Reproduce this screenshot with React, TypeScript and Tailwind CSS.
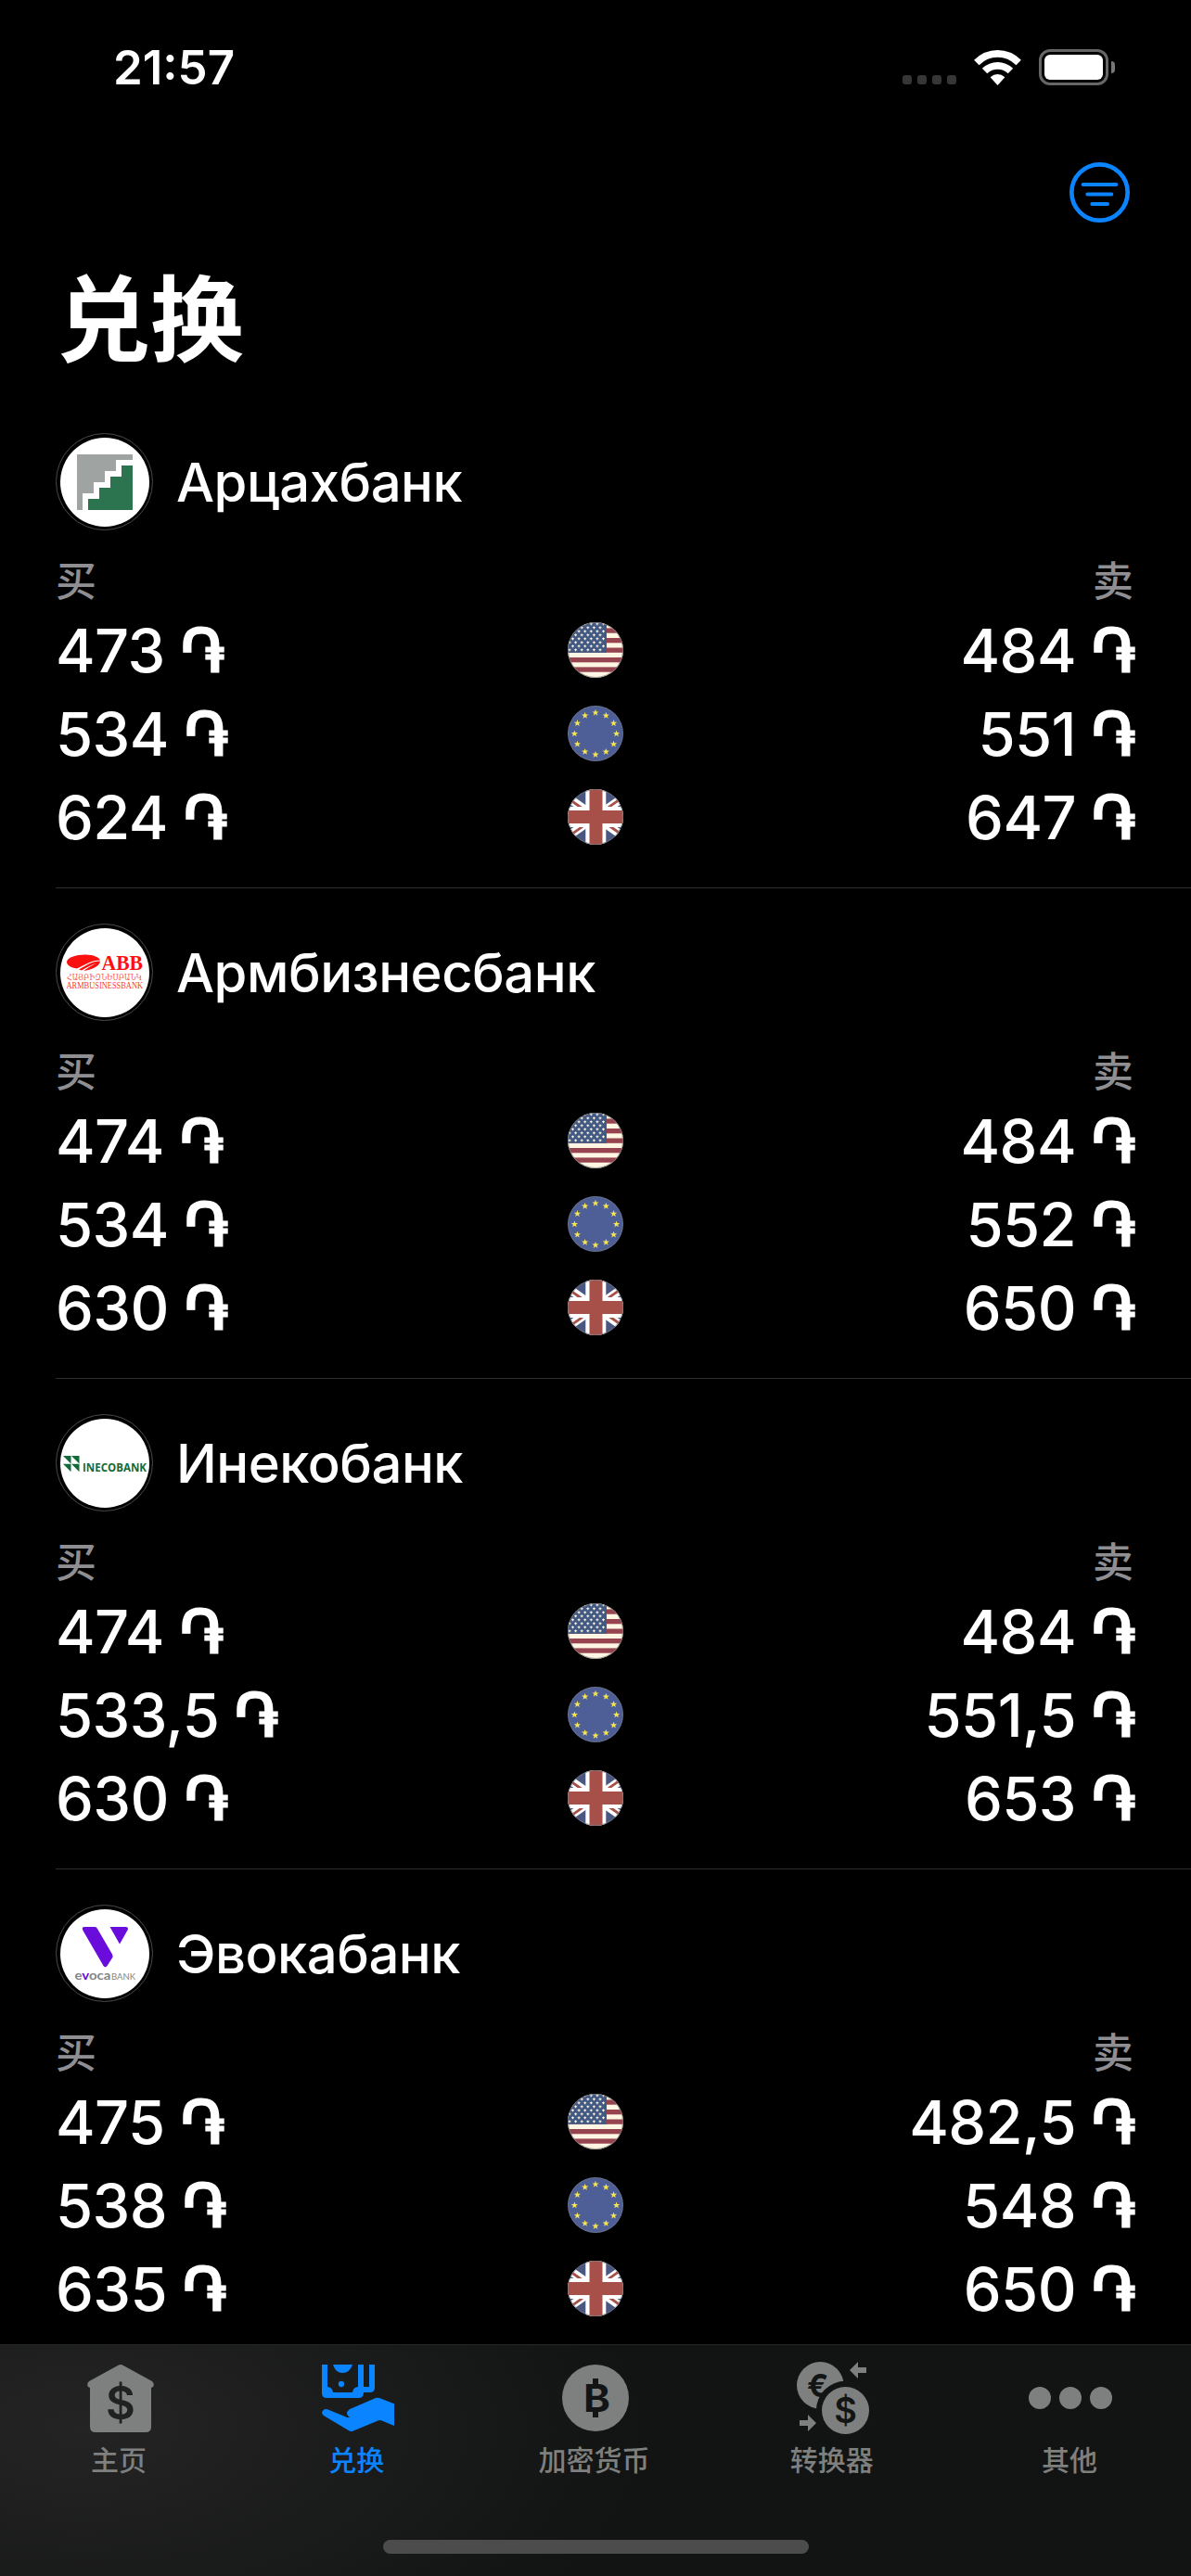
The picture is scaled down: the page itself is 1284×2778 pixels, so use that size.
import React from "react";

type Rate = { currency: "usd" | "eur" | "gbp"; buy: string; sell: string };
type Bank = { name: string; logo: React.ReactNode; rates: Rate[] };

const Flag = ({ currency }: { currency: Rate["currency"] }) => {
  return (
    <svg viewBox="0 0 60 60" className="size-[60px] rounded-full">
      {currency === "usd" && (
        <g>
          <rect width="60" height="60" fill="#fff6e3" />
          {[6.4, 17, 27.5, 38, 48.4].map((y) => (
            <rect key={y} y={y} width="60" height="5.3" fill="#96444f" />
          ))}
          <rect width="42" height="32.8" fill="#425983" />
          {[0, 1, 2, 3, 4, 5, 6, 7].map((row) =>
            [0, 1, 2, 3, 4, 5].map((col) => (
              <path
                key={`${row}-${col}`}
                transform={`translate(${(row % 2 ? 2 : 5.5) + col * 6.6} ${2 + row * 4})`}
                d="M-1.5 -.2H1.5M0-1.5V1.3"
                stroke="#fff6e3"
                strokeWidth="1.1"
              />
            )),
          )}
        </g>
      )}
      {currency === "eur" && (
        <g>
          <rect width="60" height="60" fill="#4e5f97" />
          {Array.from({ length: 12 }, (_, i) => {
            const a = (i * Math.PI) / 6;
            return (
              <path
                key={i}
                transform={`translate(${30 + 22.6 * Math.sin(a)} ${30.2 - 22.6 * Math.cos(a)})`}
                d="M0-3.8L.95-1.2 3.6-1.2 1.5.5 2.3 3.1 0 1.5-2.3 3.1-1.5.5-3.6-1.2-.95-1.2Z"
                fill="#f6e652"
              />
            );
          })}
        </g>
      )}
      {currency === "gbp" && (
        <g>
          <rect width="60" height="60" fill="#4a5780" />
          <path d="M-12 .6L72 59.4M72 .6L-12 59.4" stroke="#fff" strokeWidth="9" />
          <path
            d="M-2 8.4L16 21M62 7L44 19.6M-2 53L16 40.4M62 51.6L44 39"
            stroke="#a65049"
            strokeWidth="2.8"
          />
          <path d="M30.3 0V60M0 30H60" stroke="#fff" strokeWidth="22" />
          <path d="M30.5 0V60M0 30H60" stroke="#a65049" strokeWidth="14" />
        </g>
      )}
      <circle cx="30" cy="30" r="29.5" fill="none" stroke="#777" strokeOpacity=".7" />
    </svg>
  );
};

const ArtsakhLogo = () => (
  <svg viewBox="0 0 96 96" className="size-24">
    <path
      d="M18 18H78V24H60V36H48V48H36V60H24V78H18Z"
      fill="#9fa3a1"
    />
    <path d="M30 78V66H42V54H54V42H66V30H78V78Z" fill="#2c7350" />
  </svg>
);

const AbbLogo = () => (
  <svg viewBox="0 0 96 96" className="size-24" fill="#fb1010">
    <g transform="translate(0 -6.5)">
      <path d="M7 43C7 38 17 35 27 35C36 35 42 38 43 41C34 41 26 46 18 50C11 49 7 46 7 43Z" />
      <path d="M20 51C27 47 34 42 43 42C43 47 33 52 25 52.5C30 49 35 46 39 44C33 46 28 49 23 52Z" />
    </g>
    <g fontFamily="Liberation Serif, serif">
      <text x="44.500" y="45" fontSize="23" fontWeight="700" textLength="44.500" lengthAdjust="spacingAndGlyphs">
        ABB
      </text>
      <text
        x="7"
        y="56"
        fontSize="9"
        fillOpacity=".75"
        fontFamily="DejaVu Serif, serif"
        textLength="81"
        lengthAdjust="spacingAndGlyphs"
      >
        ՀԱՅԲԻԶՆԵՍԲԱՆԿ
      </text>
      <text x="6.500" y="65" fontSize="10.500" fillOpacity=".9" textLength="82.500" lengthAdjust="spacingAndGlyphs">
        ARMBUSINESSBANK
      </text>
    </g>
  </svg>
);

const InecoLogo = () => (
  <svg viewBox="0 0 96 96" className="size-24">
    <path
      d="M3 40H11.500V48.500ZM12 40H20.500V48.500ZM3 48.700H11.500V57.200ZM12 48.700H20.500V57.200Z"
      fill="#116a38"
    />
    <text
      x="24"
      y="57.300"
      fontSize="13"
      fontWeight="700"
      fontFamily="Open Sans, sans-serif"
      fill="#116a38"
      textLength="69"
      lengthAdjust="spacingAndGlyphs"
    >
      INECOBANK
    </text>
  </svg>
);

const EvocaLogo = () => (
  <svg viewBox="0 0 96 96" className="size-24">
    <path
      d="M26 19H37.500Q39 19 40 21L56 48.500Q57 50.500 56 52.500L50.500 61Q48.500 63.500 46.500 61L24.500 23Q22.500 19 26 19Z"
      fill="#6a0cdc"
    />
    <path d="M53.500 19H71Q74 19.500 72.500 22.500L64 37.500Z" fill="#6a0cdc" />
    <g fontFamily="Lato, sans-serif" fill="#828588">
      <text x="15.500" y="75.500" fontSize="14" fontWeight="700" textLength="39" lengthAdjust="spacingAndGlyphs">
        e<tspan fill="#6a0cdc">v</tspan>oca
      </text>
      <text x="55" y="75.500" fontSize="10" textLength="26" lengthAdjust="spacingAndGlyphs">
        BANK
      </text>
    </g>
  </svg>
);

const banks: Bank[] = [
  {
    name: "Арцахбанк",
    logo: <ArtsakhLogo />,
    rates: [
      { currency: "usd", buy: "473", sell: "484" },
      { currency: "eur", buy: "534", sell: "551" },
      { currency: "gbp", buy: "624", sell: "647" },
    ],
  },
  {
    name: "Армбизнесбанк",
    logo: <AbbLogo />,
    rates: [
      { currency: "usd", buy: "474", sell: "484" },
      { currency: "eur", buy: "534", sell: "552" },
      { currency: "gbp", buy: "630", sell: "650" },
    ],
  },
  {
    name: "Инекобанк",
    logo: <InecoLogo />,
    rates: [
      { currency: "usd", buy: "474", sell: "484" },
      { currency: "eur", buy: "533,5", sell: "551,5" },
      { currency: "gbp", buy: "630", sell: "653" },
    ],
  },
  {
    name: "Эвокабанк",
    logo: <EvocaLogo />,
    rates: [
      { currency: "usd", buy: "475", sell: "482,5" },
      { currency: "eur", buy: "538", sell: "548" },
      { currency: "gbp", buy: "635", sell: "650" },
    ],
  },
];

const StatusBar = () => (
  <div className="flex h-[141px] shrink-0 justify-between pr-[82px] pl-[122px]">
    <span className="mt-[43px] text-[51px] leading-[60px] font-semibold">21:57</span>
    <div className="mt-[53px] flex h-[39px] items-start">
      <div className="mt-7 flex gap-1.5">
        {[0, 1, 2, 3].map((dot) => (
          <div key={dot} className="size-2.5 rounded-[3px] bg-[#363636]" />
        ))}
      </div>
      <svg viewBox="271 41 151 113" className="mt-px ml-[19px] h-[38px] w-[51px]" fill="#fff">
        <path d="M271 73Q303 41 346.500 41T422 73L406 89Q380 64 346.500 64T287 89Z" />
        <path d="M297 100Q319 80 346.500 80T396 100L380 116Q365 103 346.500 103T313 116Z" />
        <path d="M323 128Q334 118 346.500 118T370 128L346.500 154Z" />
      </svg>
      <div className="ml-[19px] h-[39px] w-[75px] rounded-[12px] border-[3px] border-[#666] p-[3px]">
        <div className="h-full rounded-[6px] bg-white" />
      </div>
      <div className="mt-[13px] ml-[3px] h-[13px] w-1 rounded-r-full bg-[#777]" />
    </div>
  </div>
);

const Amount = ({ value }: { value: string }) => (
  <div className="flex items-center pt-0.5">
    <span className="text-[65px] leading-[90px] font-medium tracking-[-0.6px]">{value}</span>
    <span className="ml-[17px] font-['DejaVu_Sans'] text-[64px] leading-[90px] font-bold [-webkit-text-stroke:1px_white]">
      ֏
    </span>
  </div>
);

const BankSection = ({ bank }: { bank: Bank }) => (
  <section className="ml-[60px] h-[529px] shrink-0 border-b border-[#2d2d2f] pt-[38px] pr-[60px]">
    <div className="flex items-center gap-[25px]">
      <div className="flex size-[105px] items-center justify-center rounded-full border border-[#4a4a4a]">
        <div className="size-24 rounded-full bg-white">{bank.logo}</div>
      </div>
      <h2 className="text-[58px] leading-[72px] font-medium tracking-[-0.5px]">{bank.name}</h2>
    </div>
    <div className="mt-[27px] flex h-[56px] items-center justify-between pr-0.5 text-[44px] leading-[56px] font-medium text-[#8e8e93]">
      <span>买</span>
      <span>卖</span>
    </div>
    {bank.rates.map((rate) => (
      <div key={rate.currency} className="grid h-[90px] grid-cols-[1fr_60px_1fr] items-center">
        <Amount value={rate.buy} />
        <Flag currency={rate.currency} />
        <div className="flex justify-end">
          <Amount value={rate.sell} />
        </div>
      </div>
    ))}
  </section>
);

const HomeIcon = () => (
  <svg viewBox="0 0 72 73" className="h-[73px] w-[72px]" fill="currentColor">
    <path d="M33 1Q36-1 39 1L70 18Q73 21 71 24L69 25V67Q69 73 63 73H9Q3 73 3 67V25L1 24Q-1 21 2 18Z" />
    <text x="36" y="59" textAnchor="middle" fontSize="49" fontWeight="600" fill="#202121">
      $
    </text>
  </svg>
);

const ExchangeIcon = () => (
  <svg viewBox="48 60 234 216" className="h-[72px] w-[78px]" fill="currentColor">
    <path d="M48 60H66V132Q82 134 84 150H147Q149 134 165 132V60H183V132H201V60H219V134Q219 150 203 150H183Q183 168 167 168H64Q48 168 48 152Z" />
    <path d="M84 60H147Q138 87 115 87T84 60Z" />
    <circle cx="111" cy="123" r="9.500" />
    <path d="M66 205L130 231H139Q120 220 137 205L222 168Q229 166 236 169L282 187V258L240 241Q236 239 231 241L148 275Q143 277 138 275L55 226Q46 220 49 212Q54 201 66 205Z" />
  </svg>
);

const BitcoinIcon = () => (
  <svg viewBox="0 0 72 72" className="size-[72px]">
    <circle cx="36" cy="36" r="36" fill="currentColor" />
    <g fill="#131514">
      <text x="23" y="51" fontSize="41.500" fontWeight="700" textLength="29" lengthAdjust="spacingAndGlyphs">
        B
      </text>
      <rect x="33" y="15" width="6" height="8" />
      <rect x="33" y="49" width="6" height="8" />
    </g>
  </svg>
);

const ConverterIcon = () => (
  <svg viewBox="57 51 234 234" className="size-[78px]" fill="currentColor">
    <circle cx="133" cy="127" r="76" />
    <text x="90" y="164" fontSize="104" fontWeight="700" fill="#131514" textLength="70" lengthAdjust="spacingAndGlyphs">
      €
    </text>
    <circle cx="214.500" cy="208.500" r="95" fill="#131514" />
    <circle cx="214.500" cy="208.500" r="76.500" />
    <text x="214.500" y="249" textAnchor="middle" fontSize="114" fontWeight="600" fill="#131514">
      $
    </text>
    <path d="M228 78L255 51V69H282V87H255V105Z" />
    <path d="M120 249L93 222V240H66V258H93V276Z" />
  </svg>
);

const MoreIcon = () => (
  <div className="flex gap-[9px]">
    <div className="size-6 rounded-full bg-current" />
    <div className="size-6 rounded-full bg-current" />
    <div className="size-6 rounded-full bg-current" />
  </div>
);

const tabs = [
  { label: "主页", icon: <HomeIcon />, active: false },
  { label: "兑换", icon: <ExchangeIcon />, active: true },
  { label: "加密货币", icon: <BitcoinIcon />, active: false },
  { label: "转换器", icon: <ConverterIcon />, active: false },
  { label: "其他", icon: <MoreIcon />, active: false },
];

const TabBar = () => (
  <nav className="flex h-[250px] shrink-0 flex-col items-center border-t border-[#252626] bg-[#121413] bg-[radial-gradient(ellipse_600px_300px_at_90px_90px,#232423,#121413)]">
    <div className="grid w-full grid-cols-5 pr-[3px]">
      {tabs.map((tab) => (
        <div
          key={tab.label}
          className={`flex flex-col items-center ${tab.active ? "text-[#0a84ff]" : "text-[#7e807f]"}`}
        >
          <div className="mt-[17px] flex h-20 items-center pl-[3px]">{tab.icon}</div>
          <span className="mt-[7px] text-[30px] leading-[40px] font-medium">{tab.label}</span>
        </div>
      ))}
    </div>
    <div className="mt-[66px] h-[15px] w-[459px] rounded-full bg-[#4c4c4c]" />
  </nav>
);

const App = () => {
  return (
    <div className="flex h-[2778px] w-[1284px] flex-col overflow-hidden bg-black font-['Inter','Noto_Sans_CJK_SC',sans-serif] text-white">
      <main className="flex min-h-0 flex-1 flex-col overflow-hidden">
        <StatusBar />
        <div className="flex h-[134px] shrink-0 items-start justify-end pr-[66px]">
          <svg viewBox="579 405 195 195" className="mt-[34px] size-[65px]" fill="none" stroke="#0a84ff">
            <circle cx="676.500" cy="502.500" r="90.500" strokeWidth="14" />
            <path d="M623 477H730M637 508.500H715M652 540H702" strokeWidth="12" strokeLinecap="round" />
          </svg>
        </div>
        <h1 className="h-[154px] shrink-0 pl-[61px] text-[101px] leading-[140px] font-bold">兑换</h1>
        {banks.map((bank) => (
          <BankSection key={bank.name} bank={bank} />
        ))}
      </main>
      <TabBar />
    </div>
  );
};

export default App;
